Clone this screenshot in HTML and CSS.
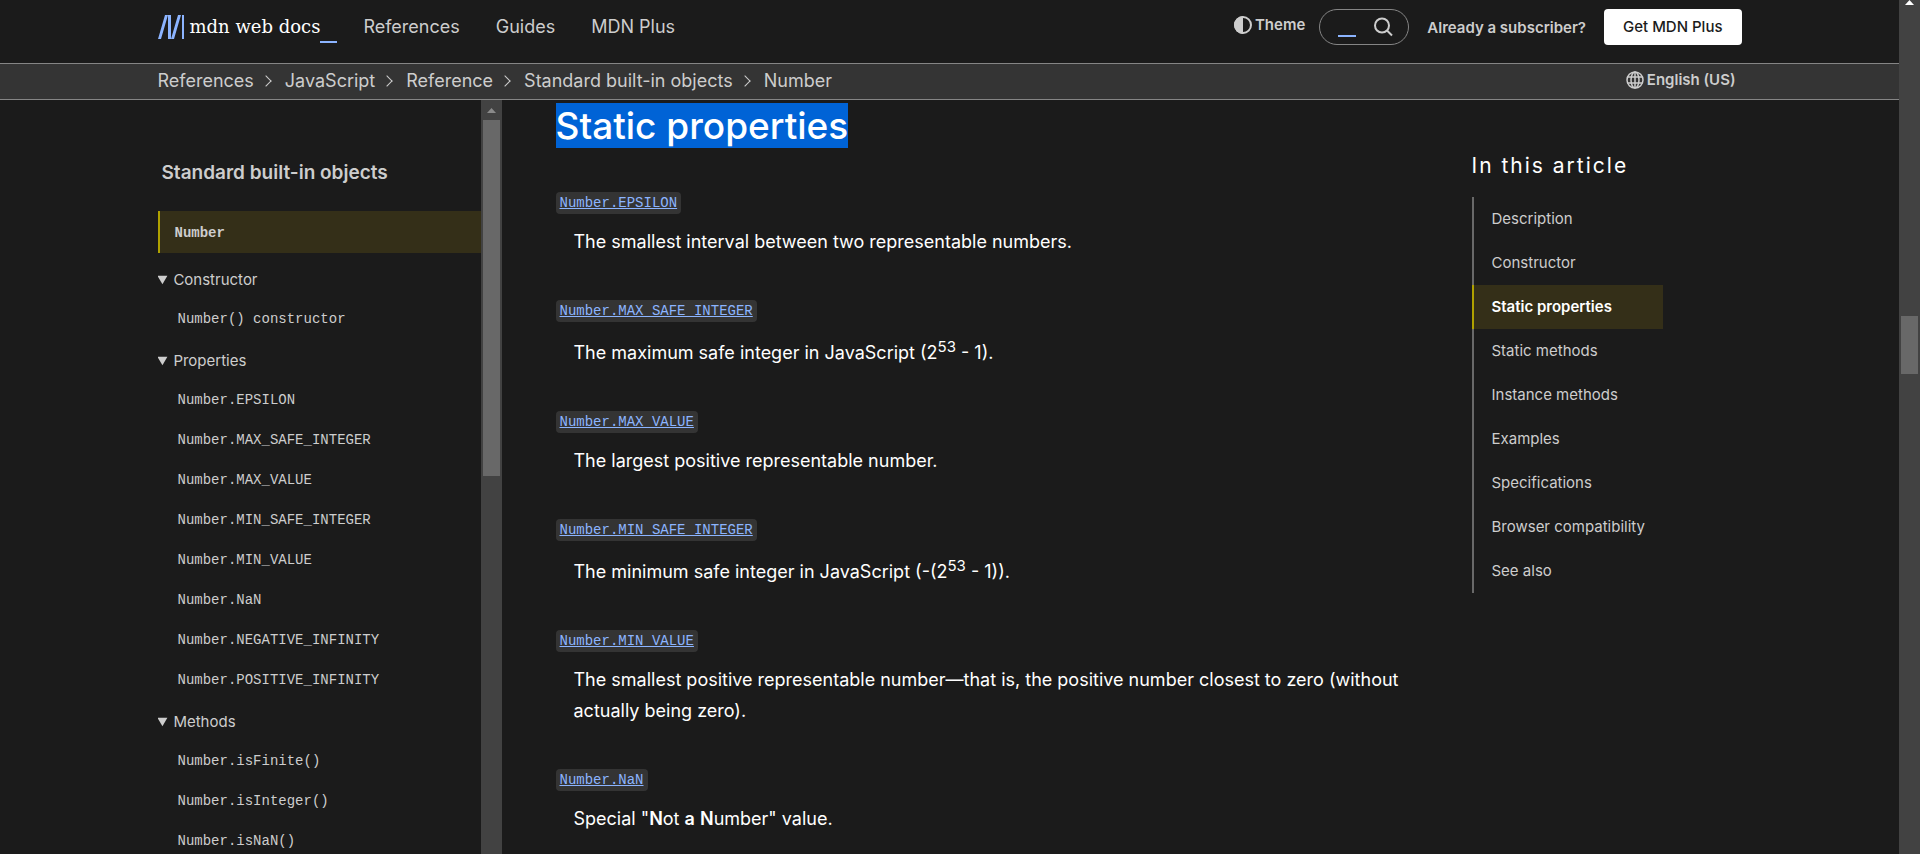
FILE: index.html
```html
<!DOCTYPE html>
<html lang="en-US">
<head>
<meta charset="utf-8">
<title>Number - JavaScript | MDN</title>
<link rel="stylesheet" href="styles.css">
</head>
<body>
<div class="window">
  <div class="page">
    <header class="top-bar">
      <div class="container">
        <a class="logo" href="#" aria-label="MDN home">
          <svg class="logo-mark" viewBox="0 0 26 24" width="26" height="24" aria-hidden="true"><path d="M0 24 7 0h3L3 24zM10 0h3v24h-3zM13 24 20 0h3L16 24zM24 0h2v24h-2z"/></svg>
          <span class="logo-name">mdn web docs</span>
          <span class="logo-cursor"></span>
        </a>
        <nav class="main-nav" aria-label="Main">
          <a href="#">References</a>
          <a href="#">Guides</a>
          <a href="#">MDN Plus</a>
        </nav>
        <div class="tools">
          <button class="icon-button theme" type="button">
            <svg viewBox="0 0 18 18" width="18" height="18" aria-hidden="true"><circle cx="9" cy="9" r="8" class="line"/><path d="M9 0a9 9 0 0 0 0 18z" class="solid"/></svg>
            Theme
          </button>
          <button class="search" type="button" aria-label="Search">
            <span class="search-cursor"></span>
            <svg viewBox="0 0 20 20" width="20" height="20" aria-hidden="true"><circle cx="9" cy="8.500" r="7" class="line"/><path d="m14 13.500 5 5" class="line"/></svg>
          </button>
          <a class="login" href="#">Already a subscriber?</a>
          <a class="plus-button" href="#">Get MDN Plus</a>
        </div>
      </div>
    </header>

    <div class="crumb-bar">
      <div class="container">
        <nav aria-label="Breadcrumb">
          <ol class="crumbs">
            <li><a href="#">References</a></li>
            <li><a href="#">JavaScript</a></li>
            <li><a href="#">Reference</a></li>
            <li><a href="#">Standard built-in objects</a></li>
            <li><a href="#">Number</a></li>
          </ol>
        </nav>
        <button class="icon-button language" type="button">
          <svg viewBox="0 0 18 18" width="18" height="18" aria-hidden="true"><g class="line"><circle cx="9" cy="9" r="8"/><ellipse cx="9" cy="9" rx="4" ry="8"/><path d="M9 1v16M1.500 6h15M1.500 12h15"/></g></svg>
          English (US)
        </button>
      </div>
    </div>

    <div class="container body">
      <aside class="sidebar">
        <nav class="sidebar-nav" aria-label="Related topics">
          <h4><a href="#">Standard built-in objects</a></h4>
          <a class="current" href="#" aria-current="page"><code>Number</code></a>
          <details open>
            <summary>Constructor</summary>
            <ul>
              <li><a href="#"><code>Number() constructor</code></a></li>
            </ul>
          </details>
          <details open>
            <summary>Properties</summary>
            <ul>
              <li><a href="#"><code>Number.EPSILON</code></a></li>
              <li><a href="#"><code>Number.MAX_SAFE_INTEGER</code></a></li>
              <li><a href="#"><code>Number.MAX_VALUE</code></a></li>
              <li><a href="#"><code>Number.MIN_SAFE_INTEGER</code></a></li>
              <li><a href="#"><code>Number.MIN_VALUE</code></a></li>
              <li><a href="#"><code>Number.NaN</code></a></li>
              <li><a href="#"><code>Number.NEGATIVE_INFINITY</code></a></li>
              <li><a href="#"><code>Number.POSITIVE_INFINITY</code></a></li>
            </ul>
          </details>
          <details open>
            <summary>Methods</summary>
            <ul>
              <li><a href="#"><code>Number.isFinite()</code></a></li>
              <li><a href="#"><code>Number.isInteger()</code></a></li>
              <li><a href="#"><code>Number.isNaN()</code></a></li>
            </ul>
          </details>
        </nav>
        <div class="scroll-track" aria-hidden="true">
          <svg viewBox="0 0 9 5" width="9" height="5"><path d="M0 5 4.500 0 9 5z"/></svg>
          <div class="thumb"></div>
        </div>
      </aside>

      <main class="article">
        <h2><mark>Static properties</mark></h2>
        <dl>
          <dt><a href="#"><code>Number.EPSILON</code></a></dt>
          <dd>The smallest interval between two representable numbers.</dd>
          <dt><a href="#"><code>Number.MAX_SAFE_INTEGER</code></a></dt>
          <dd>The maximum safe integer in JavaScript (2<sup>53</sup> - 1).</dd>
          <dt><a href="#"><code>Number.MAX_VALUE</code></a></dt>
          <dd>The largest positive representable number.</dd>
          <dt><a href="#"><code>Number.MIN_SAFE_INTEGER</code></a></dt>
          <dd>The minimum safe integer in JavaScript (-(2<sup>53</sup> - 1)).</dd>
          <dt><a href="#"><code>Number.MIN_VALUE</code></a></dt>
          <dd>The smallest positive representable number—that is, the positive number closest to zero (without actually being zero).</dd>
          <dt><a href="#"><code>Number.NaN</code></a></dt>
          <dd>Special "<strong>N</strong>ot <strong>a</strong> <strong>N</strong>umber" value.</dd>
        </dl>
      </main>

      <aside class="toc">
        <h2>In this article</h2>
        <ul>
          <li><a href="#">Description</a></li>
          <li><a href="#">Constructor</a></li>
          <li><a href="#" aria-current="true">Static properties</a></li>
          <li><a href="#">Static methods</a></li>
          <li><a href="#">Instance methods</a></li>
          <li><a href="#">Examples</a></li>
          <li><a href="#">Specifications</a></li>
          <li><a href="#">Browser compatibility</a></li>
          <li><a href="#">See also</a></li>
        </ul>
      </aside>
    </div>
  </div>
  <div class="scroll-track window-scroll" aria-hidden="true">
    <svg viewBox="0 0 9 5" width="9" height="5"><path d="M0 5 4.500 0 9 5z"/></svg>
    <div class="thumb"></div>
  </div>
</div>
</body>
</html>
```
FILE: styles.css
```css
:root {
  --bg: #1b1b1b;
  --bg-raised: #343434;
  --text: #ffffff;
  --text-soft: #cdcdcd;
  --border: #858585;
  --link: #8cb4ff;
  --accent: #afa100;
  --accent-bg: #342f18;
  --sans: Inter, "Liberation Sans", sans-serif;
  --mono: "Liberation Mono", monospace;
}

* { box-sizing: border-box; }

body {
  margin: 0;
  background: var(--bg);
  color: var(--text);
  font: 18px/31px var(--sans);
}

a { color: inherit; text-decoration: none; }
ul, ol, dl, dd { margin: 0; padding: 0; list-style: none; }
button { font-family: inherit; color: inherit; background: none; border: 0; padding: 0; cursor: pointer; }
code { font-family: var(--mono); font-size: 14px; line-height: 16px; }
.line { fill: none; stroke: currentColor; stroke-width: 2; }
.solid { fill: currentColor; }

.window { display: flex; height: 100vh; overflow: hidden; }
.page { flex: 1; min-width: 0; display: flex; flex-direction: column; }

.container {
  display: flex;
  width: 100%;
  max-width: 1584px;
  margin: 0 auto;
}

/* Header */
.top-bar { border-bottom: 1px solid var(--border); color: var(--text-soft); }
.top-bar .container { align-items: flex-start; padding: 9px 0 18px; }
.logo { display: flex; height: 36px; align-items: center; }
.logo-mark { fill: var(--link); margin-right: 6px; }
.logo-name { font: 18px/36px "DejaVu Serif", serif; color: var(--text); }
.logo-cursor { align-self: flex-end; width: 17px; height: 2px; margin-bottom: 2px; background: var(--link); }
.main-nav { display: flex; gap: 36px; margin-left: 26px; line-height: 36px; }
.tools { display: flex; align-items: center; height: 36px; margin-left: auto; font-size: 15px; font-weight: 600; }
.icon-button { display: flex; align-items: center; gap: 3px; font-size: 15px; font-weight: 600; line-height: 18px; color: var(--text-soft); }
.theme { padding-bottom: 4px; }
.search {
  display: flex;
  align-items: center;
  justify-content: space-between;
  width: 90px;
  height: 36px;
  margin: 0 18px 0 14px;
  padding: 0 15px 0 18px;
  border: 1px solid var(--border);
  border-radius: 18px;
}
.search-cursor { width: 18px; height: 2px; margin-top: 18px; background: var(--link); }
.plus-button {
  margin-left: 18px;
  padding: 0 19px;
  border-radius: 4px;
  background: #ffffff;
  color: var(--bg);
  font-weight: 500;
  line-height: 36px;
}

/* Breadcrumbs */
.crumb-bar { background: var(--bg-raised); border-bottom: 1px solid var(--border); color: var(--text-soft); }
.crumb-bar .container { justify-content: space-between; align-items: center; padding: 0 6px 2px 0; }
.crumbs { display: flex; line-height: 33px; }
.crumbs li { display: flex; align-items: center; }
.crumbs li + li::before {
  content: "";
  width: 7px;
  height: 7px;
  margin: 0 15px 0 8px;
  border: solid var(--text-soft);
  border-width: 1px 1px 0 0;
  transform: rotate(45deg);
}
.language { padding-bottom: 2px; }
.language .line { stroke-width: 1.5; }

/* Columns */
.body { flex: 1; min-height: 0; }
.sidebar { display: flex; flex: 0 0 344px; overflow: hidden; font-size: 15px; color: var(--text-soft); }
.sidebar-nav { flex: 1; padding-top: 57px; }
.sidebar h4 { margin: 0 0 22px; padding-left: 4px; font-size: 19px; font-weight: 600; line-height: 32px; }
.current {
  display: block;
  margin-bottom: 12px;
  padding-left: 15px;
  border-left: 2px solid var(--accent);
  background: var(--accent-bg);
  font-weight: 700;
  line-height: 42px;
}
.sidebar summary { line-height: 30px; cursor: pointer; }
.sidebar details { margin-bottom: 8px; }
.sidebar details ul { margin-top: 3px; }
.sidebar li { padding-left: 20px; line-height: 40px; }

.scroll-track {
  display: flex;
  flex: 0 0 21px;
  flex-direction: column;
  align-items: center;
  padding-top: 8px;
  background: #424242;
  fill: #8a8a8a;
}
.scroll-track svg { flex: none; }
.thumb { width: 17px; height: 356px; margin-top: 7px; background: #686868; }
.window-scroll { padding-top: 0; fill: #ffffff; }
.window-scroll .thumb { height: 58px; margin-top: 311px; }

/* Article */
.article { flex: 1; min-width: 0; padding: 3px 0 0 54px; overflow: hidden; }
.article h2 { margin: 0 0 36px; font-size: 37px; font-weight: 500; line-height: 46px; }
mark { background: #0063d6; color: var(--text); }
dt code { padding: 3px 4px; border-radius: 4px; background: var(--bg-raised); color: var(--link); }
dt a { color: var(--link); text-decoration: underline; }
dd { margin: 10px 0 36px; padding-left: 18px; }
sup { font-size: 15px; line-height: 25px; }
strong { font-weight: 600; }

/* Table of contents */
.toc { flex: 0 0 270px; margin-left: 56px; padding-top: 50px; font-size: 15px; color: var(--text-soft); }
.toc h2 { margin: 0 0 15px; font-size: 21px; font-weight: 400; line-height: 32px; letter-spacing: 2px; color: var(--text); }
.toc ul { width: fit-content; }
.toc a { display: block; padding: 0 18px; border-left: 2px solid #696969; line-height: 44px; }
.toc a[aria-current] { border-color: var(--accent); background: var(--accent-bg); color: var(--text); font-weight: 600; }
```
